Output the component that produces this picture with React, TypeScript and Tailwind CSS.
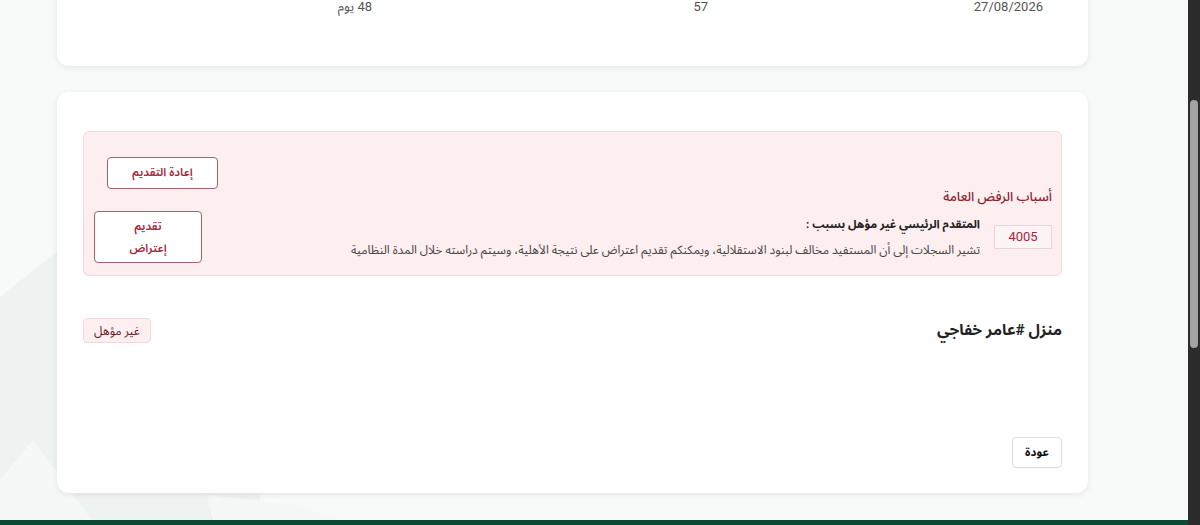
import React from 'react'

const font = "font-['Roboto','Noto_Sans_Arabic','DejaVu_Sans',sans-serif]"

function Backdrop() {
  return (
    <svg
      className="absolute inset-0 h-full w-full"
      viewBox="0 0 1188 520"
      preserveAspectRatio="none"
    >
      <polygon points="0,297 260,90 260,520 0,520" fill="#eef2f1" />
      <polygon points="0,480 33,440 92,520 0,520" fill="#f6f8f8" />
      <polygon points="207,495 300,505 340,520 213,520" fill="#f6f8f8" />
    </svg>
  )
}

function SummaryCard() {
  return (
    <div className="-mt-[20px] rounded-xl bg-white pt-[19px] pb-[51px] pr-[45px] shadow-[0_2px_6px_rgba(0,0,0,0.08)]">
      <div className="flex text-[13px] leading-[16px] text-[#555]">
        <div className="w-[335px]">27/08/2026</div>
        <div className="w-[336px]">57</div>
        <div>48 يوم</div>
      </div>
    </div>
  )
}

function RejectionAlert() {
  return (
    <div className="rounded-md border border-[#f4dadd] bg-[#fdeef0] pt-[25px] pr-[9px] pb-[12px] pl-[10px]">
      <div className="flex justify-end">
        <button className="ml-[13px] h-[32px] w-[111px] rounded border border-[#a4606c] bg-white text-[11.5px] font-semibold text-[#a3283b]">
          إعادة التقديم
        </button>
      </div>
      <div className="text-[13px] leading-[16px] font-medium text-[#8a2331]">
        أسباب الرفض العامة
      </div>
      <div className="mt-[6px] flex items-center">
        <div className="ml-[14px] flex h-[24px] w-[58px] items-center justify-center border border-[#ead3d6] bg-[#fdf4f5] text-[13px] text-[#a3283b]">
          4005
        </div>
        <div className="flex-1">
          <div className="text-[11.5px] leading-[20px] font-bold text-[#222]">
            المتقدم الرئيسي غير مؤهل بسبب :
          </div>
          <div className="mt-[6px] text-[12px] leading-[20px] text-[#444]">
            تشير السجلات إلى أن المستفيد مخالف لبنود الاستقلالية، ويمكنكم تقديم اعتراض على نتيجة الأهلية، وسيتم دراسته خلال المدة النظامية
          </div>
        </div>
        <button className="flex h-[52px] w-[108px] flex-col items-center justify-center rounded border border-[#a4606c] bg-white text-[11.5px] leading-[22px] font-semibold text-[#a3283b]">
          <span>تقديم</span>
          <span>إعتراض</span>
        </button>
      </div>
    </div>
  )
}

function DetailsCard() {
  return (
    <div className="mt-[26px] rounded-xl bg-white px-[26px] pt-[39px] pb-[25px] shadow-[0_2px_6px_rgba(0,0,0,0.08)]">
      <RejectionAlert />
      <div className="mt-[42px] flex items-center justify-between">
        <h2 className="text-[15.5px] leading-[25px] font-bold text-[#222]">منزل #عامر خفاجي</h2>
        <span className="flex h-[25px] items-center rounded border border-[#f3d9dc] bg-[#fdeef0] px-[10px] text-[12px] text-[#5c1a22]">
          غير مؤهل
        </span>
      </div>
      <div className="mt-[94px] flex">
        <button className="h-[31px] w-[50px] rounded border border-[#dddddd] bg-white text-[11.5px] font-bold text-[#111]">
          عودة
        </button>
      </div>
    </div>
  )
}

export default function App() {
  return (
    <div className={`flex h-[525px] w-[1200px] overflow-hidden ${font}`}>
      <div className="flex flex-1 flex-col bg-[#f8f9f9]">
        <div className="relative flex-1 overflow-hidden">
          <Backdrop />
          <main dir="rtl" className="relative pl-[57px] pr-[100px]">
            <SummaryCard />
            <DetailsCard />
          </main>
        </div>
        <div className="h-[5px] bg-[#0c4a36]" />
      </div>
      <div className="flex w-[12px] flex-col bg-[#2b2b2b]">
        <div className="mx-[2px] mt-[100px] h-[248px] rounded-full bg-[#a3a3a3]" />
      </div>
    </div>
  )
}
